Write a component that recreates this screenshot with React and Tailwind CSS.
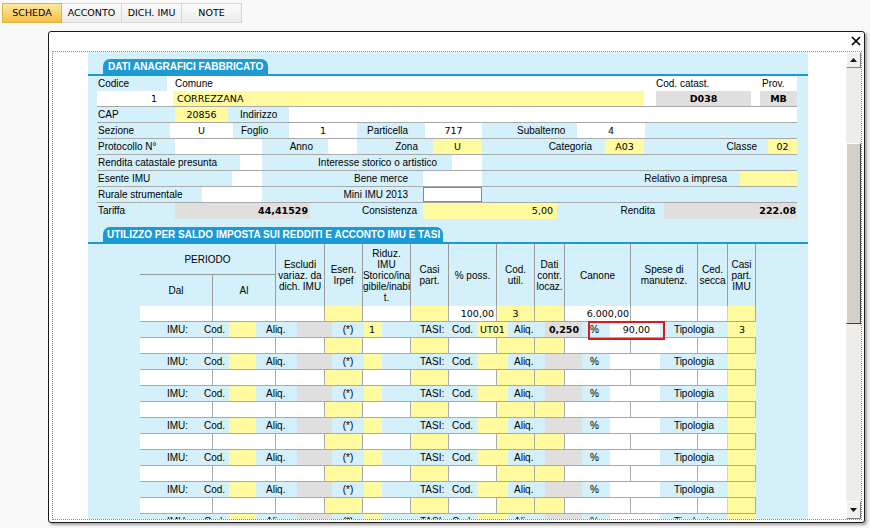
import React from "react";

const FL = "font-['Liberation_Sans',Arial,sans-serif]";
const V = "font-['DejaVu_Sans',sans-serif] text-[9.5px]";
const Y = "bg-[#fffa9e]";
const G = "bg-[#e1dedf]";
const W = "bg-white";

function C({ w, bg = "", className = "", children }) {
  return (
    <div
      className={`${w} ${bg} ${className} h-full shrink-0 overflow-hidden whitespace-nowrap`}
    >
      {children}
    </div>
  );
}

function Row({ children, last }) {
  return (
    <div
      className={`flex w-[700px] ${
        last ? "h-[16px]" : "h-[16px] border-b border-[#a9a9a9]"
      }`}
    >
      {children}
    </div>
  );
}

function Tab({ children, className }) {
  return (
    <div className="flex flex-col">
      <div
        className={`ml-[15px] h-[15px] w-fit rounded-t-[7px] bg-[#1c9ad6] text-[10px] leading-[15px] font-bold text-white ${className}`}
      >
        {children}
      </div>
      <div className="h-[2px] w-full bg-[#1c9ad6]" />
    </div>
  );
}

const headCols = [
  { w: "w-[49px]", t: ["Escludi", "variaz. da", "dich. IMU"] },
  { w: "w-[38px]", t: ["Esen.", "Irpef"] },
  { w: "w-[48px]", t: ["Riduz.", "IMU", "Storico/ina", "gibile/inabi", "t."] },
  { w: "w-[38px]", t: ["Casi", "part."] },
  { w: "w-[48px]", t: ["% poss."] },
  { w: "w-[38px]", t: ["Cod.", "util."] },
  { w: "w-[30px]", t: ["Dati", "contr.", "locaz."] },
  { w: "w-[66px]", t: ["Canone"] },
  { w: "w-[67px]", t: ["Spese di", "manutenz."] },
  { w: "w-[30px]", t: ["Ced.", "secca"] },
  { w: "w-[28px]", t: ["Casi", "part.", "IMU"] },
];

function DataRow({ first }) {
  return (
    <div className="ml-[52px] flex h-[16px] w-[616px] border-b border-[#a9a9a9]">
      <C w="w-[73px]" bg={W} className="border-r border-[#a9a9a9]" />
      <C w="w-[63px]" bg={W} className="border-r border-[#a9a9a9]" />
      <C w="w-[49px]" bg={W} className="border-r border-[#a9a9a9]" />
      <C w="w-[38px]" bg={Y} className="border-r border-[#a9a9a9]" />
      <C w="w-[48px]" bg={W} className="border-r border-[#a9a9a9]" />
      <C w="w-[38px]" bg={Y} className="border-r border-[#a9a9a9]" />
      <C w="w-[48px]" bg={W} className={`${V} border-r border-[#a9a9a9] pr-[2px] text-right`}>
        {first ? "100,00" : ""}
      </C>
      <C w="w-[38px]" bg={Y} className={`${V} border-r border-[#a9a9a9] text-center`}>
        {first ? "3" : ""}
      </C>
      <C w="w-[30px]" bg={Y} className="border-r border-[#a9a9a9]" />
      <C w="w-[66px]" bg={W} className={`${V} border-r border-[#a9a9a9] pr-[1px] text-right`}>
        {first ? "6.000,00" : ""}
      </C>
      <C w="w-[67px]" bg={W} className="border-r border-[#a9a9a9]" />
      <C w="w-[30px]" bg={W} className="border-r border-[#d0d0d0]" />
      <C w="w-[28px]" bg={Y} className="border-r border-[#a9a9a9]" />
    </div>
  );
}

function ImuRow({ first }) {
  return (
    <div className="relative ml-[52px] flex h-[16px] w-[616px] border-b border-[#a9a9a9]">
      <C w="w-[60px]" className="pl-[27px]">IMU:</C>
      <C w="w-[29px]" className="pl-[4px]">Cod.</C>
      <C w="w-[27px]" bg={Y} />
      <C w="w-[41px]" className="pl-[10px]">Aliq.</C>
      <C w="w-[35px]" bg={G} />
      <C w="w-[32px]" className="text-center">(*)</C>
      <C w="w-[18px]" bg={Y} className={`${V} pl-[5px]`}>
        {first ? "1" : ""}
      </C>
      <C w="w-[67px]" className="pl-[38px]">TASI:</C>
      <C w="w-[29px]" className="pl-[3px]">Cod.</C>
      <C w="w-[30px]" bg={Y} className={`${V} pl-[2px]`}>
        {first ? "UT01" : ""}
      </C>
      <C w="w-[37px]" className="pl-[6px]">Aliq.</C>
      <C w="w-[37px]" bg={G} className={`${V} pr-[3px] text-right font-bold`}>
        {first ? "0,250" : ""}
      </C>
      <C w="w-[28px]" className="pl-[8px]">%</C>
      <C w="w-[50px]" bg={W} className={`${V} pr-[10px] text-right`}>
        {first ? "90,00" : ""}
      </C>
      <C w="w-[68px]" className="text-center">Tipologia</C>
      <C w="w-[28px]" bg={Y} className={`${V} text-center`}>
        {first ? "3" : ""}
      </C>
      {first && (
        <div className="absolute left-[448px] top-[-1px] h-[19px] w-[77px] border-2 border-[#dc1a1a]" />
      )}
    </div>
  );
}

function ScrollBtn({ down }) {
  return (
    <div
      className={`flex ${
        down ? "h-[18px]" : "h-[16px]"
      } items-center justify-center border border-t-white border-l-white border-r-[#808080] border-b-[#808080] bg-[#f1f0ec]`}
    >
      <svg width="7" height="4" viewBox="0 0 7 4">
        <path d={down ? "M0 0H7L3.5 4Z" : "M0 4H7L3.5 0Z"} fill="#111" />
      </svg>
    </div>
  );
}

export default function App() {
  const pairs = [0, 1, 2, 3, 4, 5, 6];
  return (
    <div className={`h-[528px] w-[870px] overflow-hidden bg-[#f9f9f9] ${FL} text-black`}>
      {/* tabs */}
      <div className="flex pl-[2px] pt-[3px] font-['DejaVu_Sans',sans-serif] text-[9.5px]">
        <div className="flex h-[20px] w-[60px] items-center justify-center border border-[#e0b440] bg-linear-to-b from-[#fde7a0] to-[#f5c03e]">
          SCHEDA
        </div>
        {["ACCONTO", "DICH. IMU", "NOTE"].map((t) => (
          <div
            key={t}
            className="flex h-[20px] w-[60px] items-center justify-center border border-l-0 border-[#d6d6d6] bg-linear-to-b from-[#fbfbfb] to-[#ececec]"
          >
            {t}
          </div>
        ))}
      </div>

      {/* dialog */}
      <div className="ml-[48px] mt-[8px] flex h-[492px] w-[817px] flex-col rounded-[3px] border border-[#1a1a1a] bg-white shadow-[2px_2px_3px_rgba(0,0,0,0.35)]">
        <div className="flex h-[19px] items-start justify-end pr-[3px] pt-[4px]">
          <svg width="10" height="10" viewBox="0 0 10 10">
            <path d="M1 1L9 9M9 1L1 9" stroke="#000" strokeWidth="1.7" />
          </svg>
        </div>
        <div className="ml-[3px] flex h-[469px] w-[810px] border border-dotted border-[#8a8a8a]">
          <div className="h-full w-[793px] overflow-hidden bg-white">
            <div className="ml-[35px] min-h-full w-[720px] bg-[#d3f0fb] pt-[7px] text-[10px] leading-[15px]">
              <Tab className="pl-[5px] pr-[5px]">DATI ANAGRAFICI FABBRICATO</Tab>

              <div className="pl-[9px]">
                <div className="flex h-[15px] w-[700px]">
                  <C w="w-[70px]" className="pl-[1px]">Codice</C>
                  <C w="w-[488px]" bg={W} className="pl-[8px]">Comune</C>
                  <C w="w-[105px]" bg={W} className="pl-[1px]">Cod. catast.</C>
                  <C w="w-[37px]" bg={W} className="pl-[2px]">Prov.</C>
                </div>
                <Row>
                  <C w="w-[70px]" bg={W} className={`${V} pr-[10px] text-right`}>1</C>
                  <C w="w-[6px]" bg={W} />
                  <C w="w-[471px]" bg={Y} className={`${V} pl-[4px]`}>CORREZZANA</C>
                  <C w="w-[12px]" bg={W} />
                  <C w="w-[95px]" bg={G} className={`${V} text-center font-bold`}>D038</C>
                  <C w="w-[9px]" bg={W} />
                  <C w="w-[37px]" bg={G} className={`${V} text-center font-bold`}>MB</C>
                </Row>
                <Row>
                  <C w="w-[78px]" className="pl-[1px]">CAP</C>
                  <C w="w-[53px]" bg={Y} className={`${V} text-center`}>20856</C>
                  <C w="w-[61px]" className="pl-[12px]">Indirizzo</C>
                  <C w="w-[508px]" bg={W} />
                </Row>
                <Row>
                  <C w="w-[73px]" className="pl-[1px]">Sezione</C>
                  <C w="w-[63px]" bg={W} className={`${V} text-center`}>U</C>
                  <C w="w-[56px]" className="pl-[8px]">Foglio</C>
                  <C w="w-[68px]" bg={W} className={`${V} text-center`}>1</C>
                  <C w="w-[68px]" className="pl-[10px]">Particella</C>
                  <C w="w-[57px]" bg={W} className={`${V} text-center`}>717</C>
                  <C w="w-[95px]" className="pl-[35px]">Subalterno</C>
                  <C w="w-[68px]" bg={W} className={`${V} text-center`}>4</C>
                  <C w="w-[152px]" />
                </Row>
                <Row>
                  <C w="w-[78px]" className="pl-[1px]">Protocollo N°</C>
                  <C w="w-[87px]" bg={W} />
                  <C w="w-[66px]" className="pr-[15px] text-right">Anno</C>
                  <C w="w-[29px]" bg={W} />
                  <C w="w-[76px]" className="pr-[15px] text-right">Zona</C>
                  <C w="w-[49px]" bg={Y} className={`${V} text-center`}>U</C>
                  <C w="w-[123px]" className="pr-[13px] text-right">Categoria</C>
                  <C w="w-[39px]" bg={Y} className={`${V} text-center`}>A03</C>
                  <C w="w-[124px]" className="pr-[11px] text-right">Classe</C>
                  <C w="w-[29px]" bg={Y} className={`${V} text-center`}>02</C>
                </Row>
                <Row>
                  <C w="w-[143px]" className="pl-[1px]">Rendita catastale presunta</C>
                  <C w="w-[22px]" bg={W} />
                  <C w="w-[190px]" className="pr-[15px] text-right">Interesse storico o artistico</C>
                  <C w="w-[30px]" bg={W} />
                  <C w="w-[315px]" />
                </Row>
                <Row>
                  <C w="w-[135px]" className="pl-[1px]">Esente IMU</C>
                  <C w="w-[30px]" bg={W} />
                  <C w="w-[161px]" className="pr-[15px] text-right">Bene merce</C>
                  <C w="w-[59px]" bg={W} />
                  <C w="w-[258px]" className="pr-[13px] text-right">Relativo a impresa</C>
                  <C w="w-[57px]" bg={Y} />
                </Row>
                <Row>
                  <C w="w-[105px]" className="pl-[1px]">Rurale strumentale</C>
                  <C w="w-[60px]" bg={W} />
                  <C w="w-[161px]" className="pr-[15px] text-right">Mini IMU 2013</C>
                  <C w="w-[59px]" bg={W} className="border border-[#8a8a8a]" />
                  <C w="w-[315px]" />
                </Row>
                <Row last>
                  <C w="w-[78px]" className="pl-[1px]">Tariffa</C>
                  <C w="w-[135px]" bg={G} className={`${V} pr-[2px] text-right font-bold`}>44,41529</C>
                  <C w="w-[113px]" className="pr-[6px] text-right">Consistenza</C>
                  <C w="w-[134px]" bg={Y} className={`${V} pr-[4px] text-right`}>5,00</C>
                  <C w="w-[107px]" className="pr-[9px] text-right">Rendita</C>
                  <C w="w-[133px]" bg={G} className={`${V} pr-[1px] text-right font-bold`}>222.08</C>
                </Row>
              </div>

              <div className="mt-[8px]">
                <Tab className="pl-[4px] pr-[3px]">
                  UTILIZZO PER SALDO IMPOSTA SUI REDDITI E ACCONTO IMU E TASI
                </Tab>
              </div>

              {/* table header */}
              <div className="ml-[52px] flex h-[62px] text-center leading-[11px]">
                <div className="flex w-[136px] shrink-0 flex-col">
                  <div className="flex h-[31px] items-center justify-center border-b border-r border-[#9a9a9a]">
                    PERIODO
                  </div>
                  <div className="flex h-[31px]">
                    <div className="flex w-[73px] items-center justify-center border-r border-[#9a9a9a]">
                      Dal
                    </div>
                    <div className="flex w-[63px] items-center justify-center border-r border-[#9a9a9a]">
                      Al
                    </div>
                  </div>
                </div>
                {headCols.map((h, i) => (
                  <div
                    key={i}
                    className={`${h.w} flex shrink-0 flex-col items-center justify-center whitespace-nowrap border-r border-[#9a9a9a]`}
                  >
                    {h.t.map((l) => (
                      <div key={l}>{l}</div>
                    ))}
                  </div>
                ))}
              </div>

              {pairs.map((i) => (
                <React.Fragment key={i}>
                  <DataRow first={i === 0} />
                  <ImuRow first={i === 0} />
                </React.Fragment>
              ))}
            </div>
          </div>

          {/* scrollbar */}
          <div className="flex h-full w-[15px] flex-col bg-[#eeede8]">
            <ScrollBtn />
            <div className="h-[75px]" />
            <div className="h-[181px] border border-t-white border-l-white border-r-[#404040] border-b-[#404040] bg-[#d4d0c8]" />
            <div className="flex-1" />
            <ScrollBtn down />
          </div>
        </div>
      </div>
    </div>
  );
}
